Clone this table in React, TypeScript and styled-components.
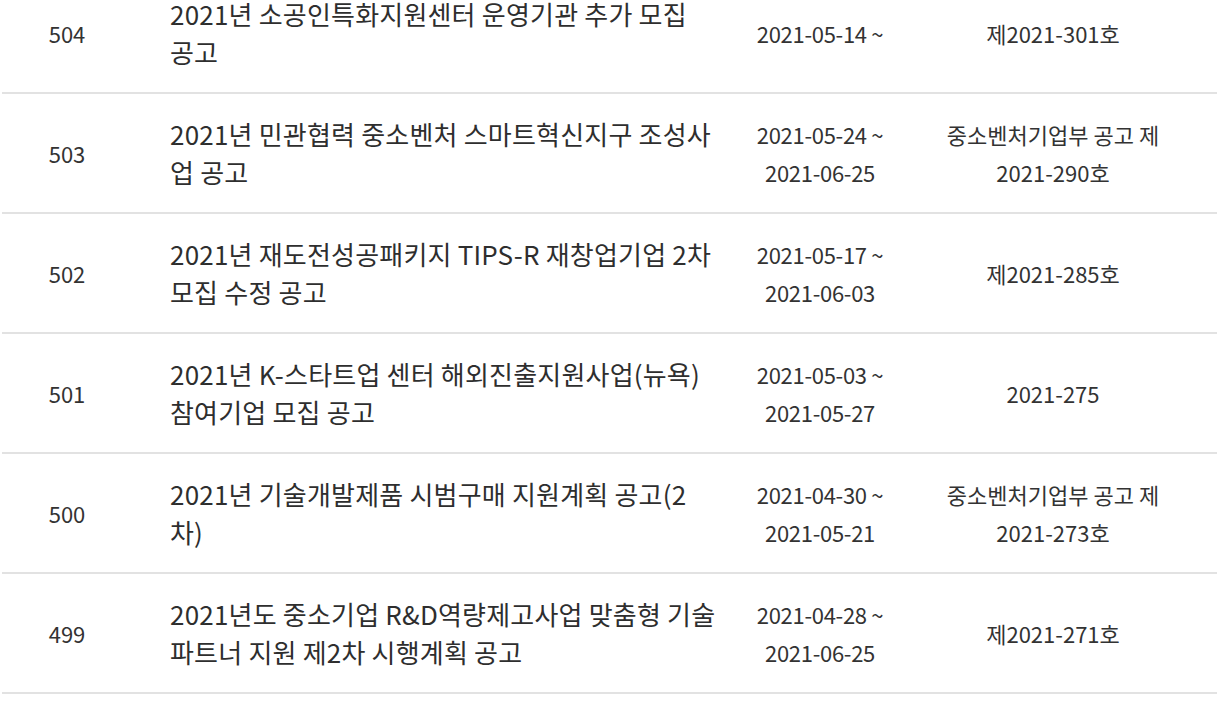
import type { FC } from "react";
import styled, { createGlobalStyle } from "styled-components";

type Notice = {
  no: number;
  title: string[];
  start: string;
  end?: string;
  code: string[];
};

// titles are kept in the lines the board shows them in
const notices: Notice[] = [
  {
    no: 504,
    title: ["2021년 소공인특화지원센터 운영기관 추가 모집", "공고"],
    start: "2021-05-14",
    code: ["제2021-301호"],
  },
  {
    no: 503,
    title: ["2021년 민관협력 중소벤처 스마트혁신지구 조성사", "업 공고"],
    start: "2021-05-24",
    end: "2021-06-25",
    code: ["중소벤처기업부 공고 제", "2021-290호"],
  },
  {
    no: 502,
    title: ["2021년 재도전성공패키지 TIPS-R 재창업기업 2차", "모집 수정 공고"],
    start: "2021-05-17",
    end: "2021-06-03",
    code: ["제2021-285호"],
  },
  {
    no: 501,
    title: ["2021년 K-스타트업 센터 해외진출지원사업(뉴욕)", "참여기업 모집 공고"],
    start: "2021-05-03",
    end: "2021-05-27",
    code: ["2021-275"],
  },
  {
    no: 500,
    title: ["2021년 기술개발제품 시범구매 지원계획 공고(2", "차)"],
    start: "2021-04-30",
    end: "2021-05-21",
    code: ["중소벤처기업부 공고 제", "2021-273호"],
  },
  {
    no: 499,
    title: ["2021년도 중소기업 R&D역량제고사업 맞춤형 기술", "파트너 지원 제2차 시행계획 공고"],
    start: "2021-04-28",
    end: "2021-06-25",
    code: ["제2021-271호"],
  },
];

const GlobalStyle = createGlobalStyle`
  html, body {
    margin: 0;
    background: #fff;
  }
  body {
    font-family: "Noto Sans CJK KR", "Noto Sans", sans-serif;
    color: #333;
  }
`;

const List = styled.div`
  margin-top: -26px;
  padding-left: 2px;
`;

const Row = styled.div`
  display: grid;
  grid-template-columns: 130px 1fr 176px 290px 19px;
  align-items: center;
  height: 120px;
  box-sizing: border-box;
  border-bottom: 2px solid #e2e2e2;
`;

const Num = styled.div`
  text-align: center;
  font-size: 22px;
`;

const Title = styled.div`
  padding-left: 38px;
  font-size: 26px;
  line-height: 38px;
  letter-spacing: 0.2px;
  color: #2e2e2e;
`;

const Line = styled.span`
  display: block;
  white-space: nowrap;
`;

const Period = styled.div`
  text-align: center;
  font-size: 22px;
  line-height: 38px;
  letter-spacing: -0.3px;
`;

const Code = styled.div`
  text-align: center;
  font-size: 22px;
  line-height: 38px;
`;

const NoticeRow: FC<{ notice: Notice }> = ({ notice }) => (
  <Row>
    <Num>{notice.no}</Num>
    <Title>
      {notice.title.map((line) => (
        <Line key={line}>{line}</Line>
      ))}
    </Title>
    <Period>
      <Line>{notice.start} ~</Line>
      {notice.end && <Line>{notice.end}</Line>}
    </Period>
    <Code>
      {notice.code.map((line) => (
        <Line key={line}>{line}</Line>
      ))}
    </Code>
    <div />
  </Row>
);

const App: FC = () => (
  <>
    <GlobalStyle />
    <List>
      {notices.map((n) => (
        <NoticeRow key={n.no} notice={n} />
      ))}
    </List>
  </>
);

export default App;
